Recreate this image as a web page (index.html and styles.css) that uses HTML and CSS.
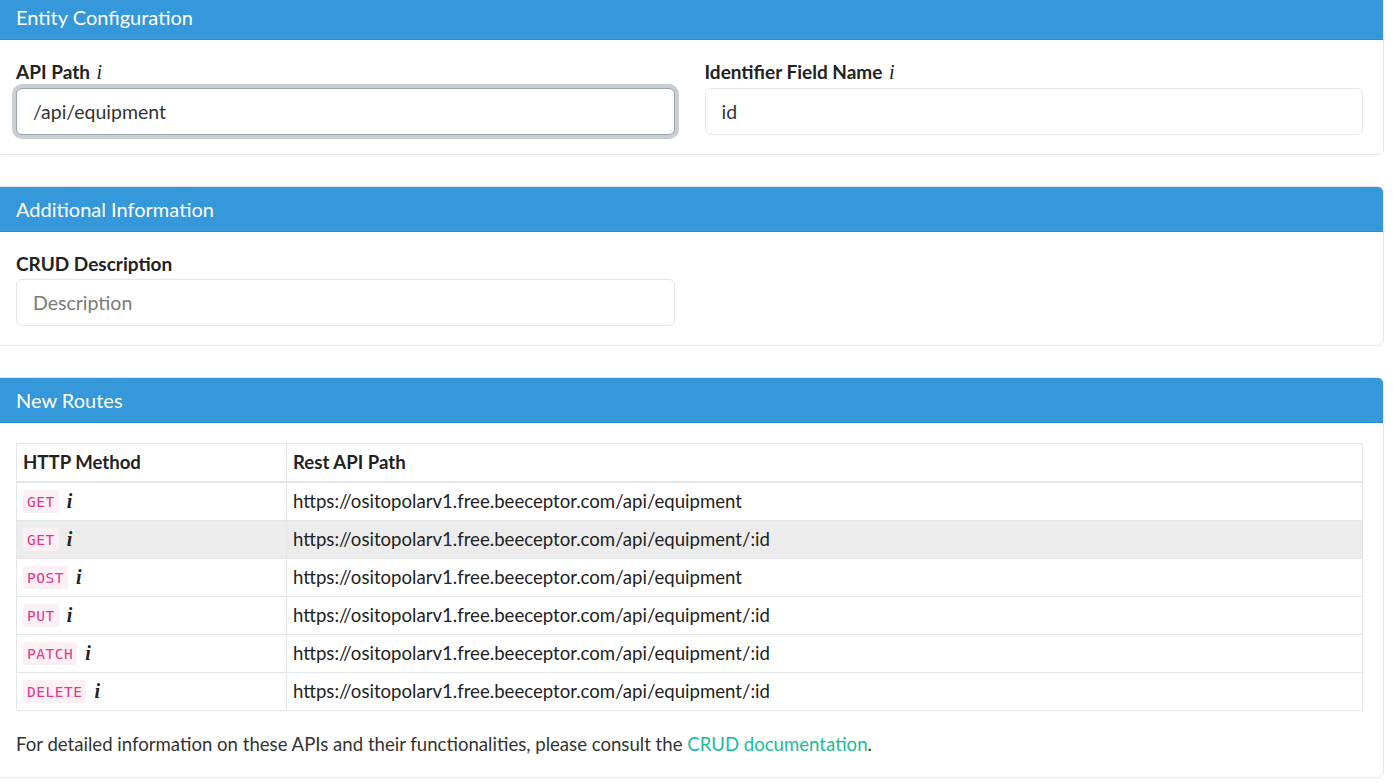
FILE: index.html
```html
<!DOCTYPE html>
<html lang="en">
<head>
<meta charset="utf-8">
<title>CRUD</title>
<link rel="stylesheet" href="styles.css">
</head>
<body>
<div class="page">
  <section class="card">
    <div class="card-header">Entity Configuration</div>
    <div class="card-body">
      <div class="form-row">
        <div class="field">
          <label class="label">API Path <i class="info">i</i></label>
          <input class="input focused" type="text" value="/api/equipment">
        </div>
        <div class="field">
          <label class="label">Identifier Field Name <i class="info">i</i></label>
          <input class="input" type="text" value="id">
        </div>
      </div>
    </div>
  </section>

  <section class="card">
    <div class="card-header">Additional Information</div>
    <div class="card-body">
      <div class="form-row">
        <div class="field">
          <label class="label">CRUD Description</label>
          <input class="input" type="text" placeholder="Description">
        </div>
      </div>
    </div>
  </section>

  <section class="card">
    <div class="card-header">New Routes</div>
    <div class="card-body">
      <table class="routes">
        <thead>
          <tr><th class="col-method">HTTP Method</th><th>Rest API Path</th></tr>
        </thead>
        <tbody>
          <tr><td><code class="method">GET</code><i class="info">i</i></td><td>https://ositopolarv1.free.beeceptor.com/api/equipment</td></tr>
          <tr class="hover"><td><code class="method">GET</code><i class="info">i</i></td><td>https://ositopolarv1.free.beeceptor.com/api/equipment/:id</td></tr>
          <tr><td><code class="method">POST</code><i class="info">i</i></td><td>https://ositopolarv1.free.beeceptor.com/api/equipment</td></tr>
          <tr><td><code class="method">PUT</code><i class="info">i</i></td><td>https://ositopolarv1.free.beeceptor.com/api/equipment/:id</td></tr>
          <tr><td><code class="method">PATCH</code><i class="info">i</i></td><td>https://ositopolarv1.free.beeceptor.com/api/equipment/:id</td></tr>
          <tr><td><code class="method">DELETE</code><i class="info">i</i></td><td>https://ositopolarv1.free.beeceptor.com/api/equipment/:id</td></tr>
        </tbody>
      </table>
      <p class="note">For detailed information on these APIs and their functionalities, please consult the <a href="#" class="link">CRUD documentation</a>.</p>
    </div>
  </section>
</div>
</body>
</html>
```

FILE: styles.css
```css
* { box-sizing: border-box; }

html, body {
  margin: 0;
  padding: 0;
  background: #ffffff;
}

body {
  font-family: Lato, "Open Sans", "Liberation Sans", sans-serif;
  color: #222;
  overflow: hidden;
}

.page {
  display: flex;
  flex-direction: column;
  gap: 31px;
  width: 1389px;
  margin: -6px 0 0 -5px;
}

.card {
  border: 1px solid #e4e6ea;
  border-radius: 6px;
  overflow: hidden;
  background: #fff;
}

.card-header {
  background: #3498db;
  color: #fff;
  font-size: 20px;
  line-height: 23px;
  padding: 11px 20px 10px 20px;
  border-bottom: 1px solid #2f8ccb;
}

.card-body {
  padding: 20px 20px 19px 20px;
}

.form-row {
  display: grid;
  grid-template-columns: 1fr 1fr;
  column-gap: 30px;
}

.field {
  display: flex;
  flex-direction: column;
}

.label {
  font-weight: 700;
  font-size: 19px;
  line-height: 23px;
  margin-bottom: 4px;
  color: #222;
}

.info {
  font-family: "Liberation Serif", "DejaVu Serif", serif;
  font-style: italic;
  font-weight: 400;
  font-size: 20px;
  margin-left: 2px;
}

.input {
  height: 47px;
  width: 100%;
  border: 1px solid #e3e6ea;
  border-radius: 6px;
  padding: 0 16px;
  font-family: Lato, "Open Sans", sans-serif;
  font-size: 19.5px;
  color: #333;
  background: #fff;
  outline: none;
}

.input::placeholder {
  color: #7b7b7b;
}

.input.focused {
  border-color: #9ea5ad;
  box-shadow: 0 0 0 4px #c9ced3;
}

.routes {
  width: 100%;
  border-collapse: collapse;
  font-size: 18.6px;
  color: #222;
}

.routes th,
.routes td {
  border: 1px solid #e4e6ea;
  padding: 6px 6px;
  line-height: 25px;
  height: 38px;
  text-align: left;
  vertical-align: top;
}

.routes th {
  font-weight: 700;
  border-bottom-width: 2px;
}

.routes .col-method {
  width: 270px;
}

.routes tr.hover td {
  background: #ececec;
}

.method {
  display: inline-block;
  font-family: "DejaVu Sans Mono", "Liberation Mono", monospace;
  font-size: 14.5px;
  line-height: 15px;
  color: #e8348a;
  background: #fbf0f4;
  padding: 5px 4px 3px;
  border-radius: 2px;
  vertical-align: 1px;
  letter-spacing: 0.5px;
}

.routes .info {
  font-weight: 700;
  margin-left: 8px;
  font-size: 20px;
  line-height: 20px;
}

.note {
  margin: 22px 0 3px;
  font-size: 18.6px;
  line-height: 22px;
  color: #333;
}

.link {
  color: #18bc9c;
  text-decoration: none;
}
```
